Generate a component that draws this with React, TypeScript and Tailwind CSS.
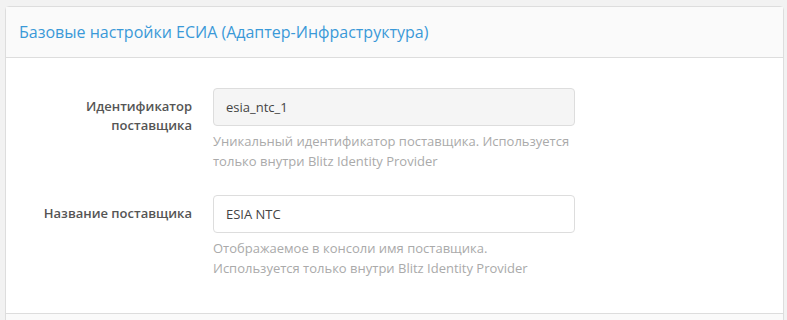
const fields = [
  {
    label: ['Идентификатор', 'поставщика'],
    value: 'esia_ntc_1',
    readOnly: true,
    help: ['Уникальный идентификатор поставщика. Используется', 'только внутри Blitz Identity Provider'],
  },
  {
    label: ['Название поставщика'],
    value: 'ESIA NTC',
    readOnly: false,
    help: ['Отображаемое в консоли имя поставщика.', 'Используется только внутри Blitz Identity Provider'],
  },
];

export default function App() {
  return (
    <div className="min-h-[320px] bg-[#f2f2f2] pt-[6px] pl-[5px] pr-[3px] font-['Open_Sans',sans-serif]">
      <div className="rounded-t-[4px] border border-[#dddddd] bg-white">
        {/* Header */}
        <div className="flex h-[51px] items-center border-b border-[#dddddd] bg-[#fafafa] px-[13px]">
          <h3 className="text-[16px] leading-[20px] text-[#3a99d8]">
            Базовые настройки ЕСИА (Адаптер-Инфраструктура)
          </h3>
        </div>

        {/* Body */}
        <div className="flex flex-col gap-[24px] pt-[30px] pb-[35px]">
          {fields.map((f) => (
            <div key={f.value} className="flex">
              <label className="w-[207px] pr-[21px] pt-[9px] text-right text-[13px] font-semibold leading-[19px] text-[#555555]">
                {f.label.map((l) => (
                  <div key={l}>{l}</div>
                ))}
              </label>
              <div className="w-[362px]">
                <input
                  readOnly
                  value={f.value}
                  className={`h-[38px] w-full rounded-[4px] border border-[#dddddd] px-[12px] text-[13px] text-[#444444] outline-none ${
                    f.readOnly ? 'bg-[#f5f5f5]' : 'bg-white'
                  }`}
                />
                <div className="mt-[5px] text-[13px] leading-[20px] text-[#aaaaaa]">
                  {f.help.map((h) => (
                    <div key={h}>{h}</div>
                  ))}
                </div>
              </div>
            </div>
          ))}
        </div>

        {/* Footer */}
        <div className="h-[10px] border-t border-[#dddddd] bg-[#fafafa]" />
      </div>
    </div>
  );
}
